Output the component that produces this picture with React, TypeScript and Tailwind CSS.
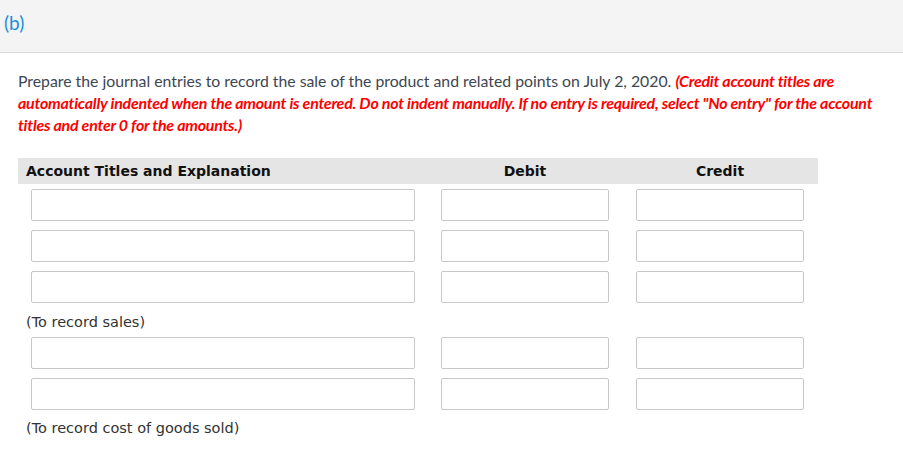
import React from "react";

const Box = ({ w }: { w: string }) => (
  <div className={`${w} h-[32px] border border-[#c8c8c8] rounded-[2px] bg-white`} />
);

const Row = () => (
  <div className="grid grid-cols-[410px_194px_196px] h-[41px] pt-[5px]">
    <div className="pl-[13px]"><Box w="w-[384px]" /></div>
    <div className="pl-[13px]"><Box w="w-[168px]" /></div>
    <div className="pl-[14px]"><Box w="w-[168px]" /></div>
  </div>
);

export default function App() {
  return (
    <div className="bg-white w-[903px] h-[453px] overflow-hidden" style={{ fontFamily: "Lato, 'Open Sans', sans-serif" }}>
      <div className="h-[53px] bg-[#f4f4f4] border-b border-[#dcdcdc] px-[4px] pt-[9px]">
        <span className="text-[#1a8fe0] text-[19px]" style={{ fontFamily: "Lato, sans-serif" }}>(b)</span>
      </div>
      <div className="pl-[18px] pr-[20px] pt-[17px] text-[15.8px] leading-[22px] text-[#3d4652]">
        Prepare the journal entries to record the sale of the product and related points on July 2, 2020.{" "}
        <span className="text-[#ff0000] text-[16px] font-bold italic tracking-[-0.25px]">
          (Credit account titles are automatically indented when the amount is entered. Do not indent manually. If no entry is required, select "No entry" for the account titles and enter 0 for the amounts.)
        </span>
      </div>
      <div className="ml-[18px] mt-[22px] w-[800px]" style={{ fontFamily: "'DejaVu Sans', Verdana, sans-serif" }}>
        <div className="grid grid-cols-[410px_194px_196px] h-[26px] bg-[#e5e5e5] items-center text-[14px] font-bold text-[#111]">
          <div className="pl-[8px]">Account Titles and Explanation</div>
          <div className="text-center">Debit</div>
          <div className="text-center">Credit</div>
        </div>
        <Row />
        <Row />
        <Row />
        <div className="h-[25px] pl-[8px] pt-[5px] text-[14.5px] text-[#333] leading-[20px]">(To record sales)</div>
        <Row />
        <Row />
        <div className="pl-[8px] pt-[4px] text-[14.5px] text-[#333] leading-[20px]">(To record cost of goods sold)</div>
      </div>
    </div>
  );
}
